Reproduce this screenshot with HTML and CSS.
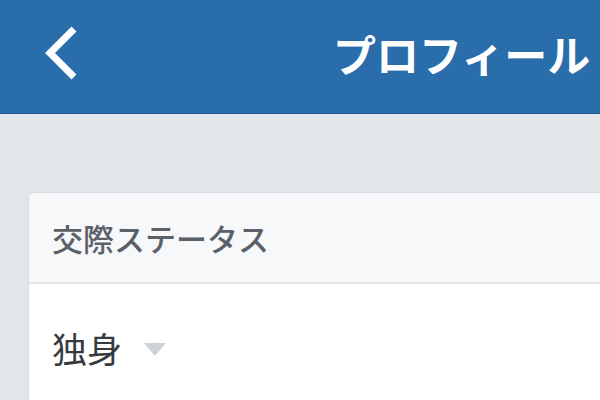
FILE: index.html
```html
<!DOCTYPE html>
<html lang="ja">
<head>
<meta charset="utf-8">
<link rel="stylesheet" href="styles.css">
</head>
<body>
<header class="navbar">
  <svg class="back" width="44" height="64" viewBox="0 0 44 64">
    <path d="M38 8 L14 32 L38 56" fill="none" stroke="#ffffff" stroke-width="7" stroke-linejoin="miter" stroke-linecap="butt"/>
  </svg>
  <h1 class="title">プロフィール</h1>
</header>
<main class="content">
  <section class="card">
    <div class="card-head">交際ステータス</div>
    <div class="card-body">
      <span class="value">独身</span>
      <span class="caret"></span>
    </div>
  </section>
</main>
</body>
</html>
```

FILE: styles.css
```css
html, body {
  margin: 0;
  padding: 0;
  width: 600px;
  height: 400px;
  overflow: hidden;
}
body {
  background: #e3e6e9;
  font-family: "Noto Sans CJK JP", "Noto Sans", sans-serif;
}
.navbar {
  height: 113px;
  background: #2a6dab;
  border-bottom: 1px solid #1f5c94;
  display: flex;
  align-items: flex-start;
}
.back {
  display: block;
  margin-left: 36px;
  margin-top: 21px;
  flex: none;
}
.title {
  margin: 31px 0 0 253px;
  font-size: 43px;
  line-height: 44px;
  font-weight: 700;
  color: #ffffff;
  white-space: nowrap;
}
.content {
  padding: 78px 0 0 28px;
}
.card {
  width: 572px;
  background: #ffffff;
  border: 1px solid #d9dde1;
  border-right: none;
  border-bottom: none;
  border-radius: 6px 0 0 0;
  overflow: hidden;
}
.card-head {
  height: 89px;
  display: flex;
  align-items: center;
  padding-left: 23px;
  background: #f7f8fa;
  border-bottom: 2px solid #e0e3e7;
  font-size: 31px;
  font-weight: 500;
  color: #5b6168;
  white-space: nowrap;
}
.card-body {
  display: flex;
  align-items: center;
  padding: 44px 0 32px 23px;
}
.value {
  font-size: 35px;
  line-height: 40px;
  color: #343a40;
}
.caret {
  width: 0;
  height: 0;
  margin-left: 22px;
  margin-top: 2px;
  border-left: 11.5px solid transparent;
  border-right: 11.5px solid transparent;
  border-top: 13px solid #cdd2d8;
}
```
